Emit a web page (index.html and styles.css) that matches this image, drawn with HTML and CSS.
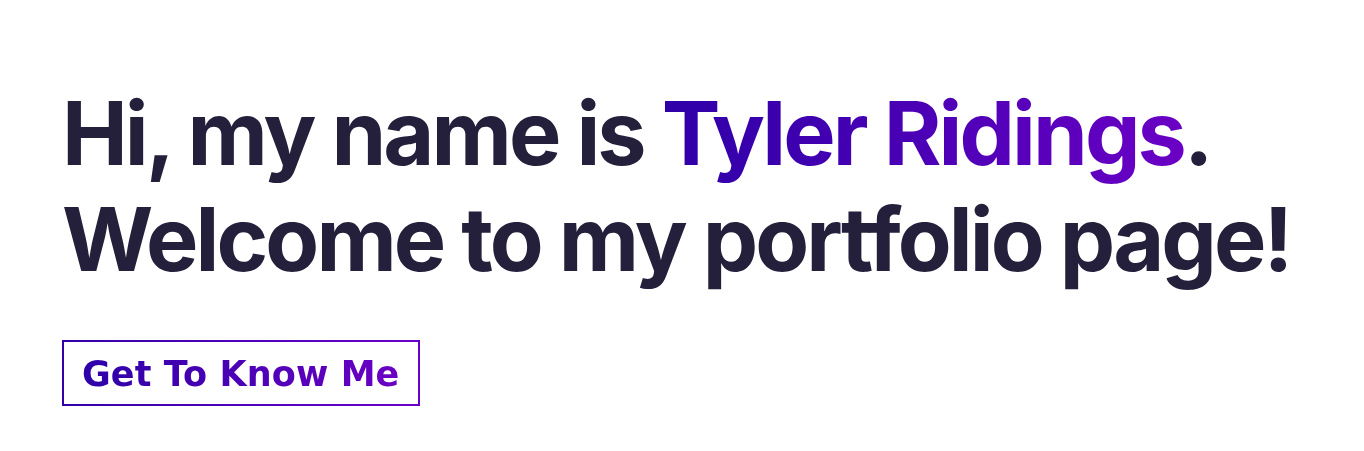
FILE: index.html
```html
<!DOCTYPE html>
<html>
<head>
<meta charset="utf-8">
<link rel="stylesheet" href="styles.css">
</head>
<body>
<main class="hero">
  <h1 class="title">Hi, my name is <span class="grad">Tyler Ridings</span>.<br>Welcome to my portfolio page!</h1>
  <a class="btn" href="#"><span class="grad">Get To Know Me</span></a>
</main>
</body>
</html>
```
FILE: styles.css
```css
html, body { margin: 0; background: #fff; }
.hero {
  padding: 80px 0 0 62px;
  display: flex;
  flex-direction: column;
  align-items: flex-start;
}
.title {
  margin: 0;
  font-family: Inter, "Liberation Sans", sans-serif;
  font-weight: 700;
  font-size: 88px;
  line-height: 106px;
  letter-spacing: -2.9px;
  color: #24203b;
}
.grad {
  background: linear-gradient(90deg, #2e00a8, #6a00c4);
  -webkit-background-clip: text;
  background-clip: text;
  color: transparent;
}
.btn {
  margin-top: 48px;
  display: inline-block;
  padding: 12px 19px 10px 18px;
  border: 2px solid transparent;
  border-image: linear-gradient(90deg, #3300aa, #6a00c6) 1;
  text-decoration: none;
  font-family: "DejaVu Sans", sans-serif;
  font-weight: 700;
  font-size: 35px;
  line-height: 40px;
  letter-spacing: 0.1px;
}
```
